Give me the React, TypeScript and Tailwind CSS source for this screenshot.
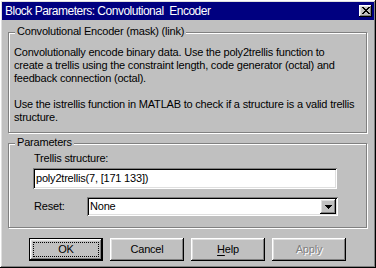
import React from "react";

// Win95 style bevels
const raised =
    "shadow-[inset_-1px_-1px_#000,inset_1px_1px_#fff,inset_-2px_-2px_#808080,inset_2px_2px_#dfdfdf]";
const sunken =
    "shadow-[inset_1px_1px_#808080,inset_-1px_-1px_#fff,inset_2px_2px_#000,inset_-2px_-2px_#dfdfdf]";

const GroupBox = ({
                      label,
                      className,
                      children,
                  }: {
    label: string;
    className?: string;
    children: React.ReactNode;
}) => (
    <div
        className={`relative w-[359px] border border-[#808080] shadow-[inset_1px_1px_#fff,1px_1px_#fff] ${className ?? ""}`}
    >
        <span className="absolute left-[6px] top-[-8px] px-[2px] bg-[#c0c0c0] leading-[13px] whitespace-nowrap">
            {label}
        </span>
        {children}
    </div>
);

const Button = ({
                    children,
                    isDefault,
                    disabled,
                }: {
    children: React.ReactNode;
    isDefault?: boolean;
    disabled?: boolean;
}) => {
    if (isDefault) {
        return (
            <div className="w-[74px] h-[23px] border border-black">
                <div className={`w-full h-full flex p-[3px] ${raised}`}>
                    <span className="flex-1 flex items-center justify-center border border-dotted border-black leading-[13px]">
                        {children}
                    </span>
                </div>
            </div>
        );
    }
    return (
        <div
            className={`w-[74px] h-[23px] flex items-center justify-center leading-[13px] ${raised} ${
                disabled ? "text-[#808080] [text-shadow:1px_1px_0_#fff]" : ""
            }`}
        >
            {children}
        </div>
    );
};

export default function App() {
    return (
        <div
            className={`w-[376px] h-[268px] bg-[#c0c0c0] p-[2px] flex flex-col text-[11px] tracking-[-0.2px] text-black font-['Liberation_Sans',Arial,sans-serif] ${raised}`}
        >
            {/* title bar */}
            <div className="h-[18px] bg-[#000080] flex items-center justify-between pl-[3px] pr-[2px]">
                <span className="text-white text-[12px] tracking-[-0.5px] whitespace-pre leading-[14px]">
                    Block Parameters: Convolutional  Encoder
                </span>
                <div className={`w-[13px] h-[12px] bg-[#c0c0c0] flex items-center justify-center ${raised}`}>
                    <svg width="8" height="7" viewBox="0 0 8 7" shapeRendering="crispEdges" className="mb-[1px]">
                        <path
                            d="M0 0h2v1H0zM6 0h2v1H6zM1 1h2v1H1zM5 1h2v1H5zM2 2h4v1H2zM3 3h2v1H3zM2 4h4v1H2zM1 5h2v1H1zM5 5h2v1H5zM0 6h2v1H0zM6 6h2v1H6z"
                            fill="#000"
                        />
                    </svg>
                </div>
            </div>

            <div className="flex flex-col pl-[6px]">
                {/* mask description */}
                <GroupBox label="Convolutional Encoder (mask) (link)" className="mt-[12px]">
                    <div className="pt-[13px] pl-[5px] pb-[8px] leading-[13px] whitespace-nowrap">
                        <p>
                            Convolutionally encode binary data. Use the poly2trellis function to
                            <br/>
                            create a trellis using the constraint length, code generator (octal) and
                            <br/>
                            feedback connection (octal).
                        </p>
                        <p className="mt-[13px]">
                            Use the istrellis function in MATLAB to check if a structure is a valid trellis
                            <br/>
                            structure.
                        </p>
                    </div>
                </GroupBox>

                {/* parameters */}
                <GroupBox label="Parameters" className="mt-[10px]">
                    <div className="pt-[8px] pl-[24px] pb-[11px] flex flex-col">
                        <span className="ml-[1px] leading-[13px]">Trellis structure:</span>
                        <div className={`mt-[3px] w-[304px] h-[21px] bg-white flex items-center pl-[3px] ${sunken}`}>
                            poly2trellis(7, [171 133])
                        </div>
                        <div className="mt-[8px] flex items-center">
                            <span className="w-[53px] ml-[1px] leading-[13px]">Reset:</span>
                            <div className={`w-[251px] h-[19px] bg-white flex items-center p-[2px] ${sunken}`}>
                                <span className="flex-1 pl-[1px]">None</span>
                                <div className={`w-[16px] h-[15px] bg-[#c0c0c0] flex items-center justify-center ${raised}`}>
                                    <svg width="7" height="4" viewBox="0 0 7 4" shapeRendering="crispEdges">
                                        <path d="M0 0h7v1H0zM1 1h5v1H1zM2 2h3v1H2zM3 3h1v1H3z" fill="#000"/>
                                    </svg>
                                </div>
                            </div>
                        </div>
                    </div>
                </GroupBox>

                {/* buttons */}
                <div className="mt-[10px] pl-[21px] flex gap-[7px]">
                    <Button isDefault>OK</Button>
                    <Button>Cancel</Button>
                    <Button>
                        <span><span className="underline underline-offset-[2px]">H</span>elp</span>
                    </Button>
                    <Button disabled>Apply</Button>
                </div>
            </div>
        </div>
    );
}
